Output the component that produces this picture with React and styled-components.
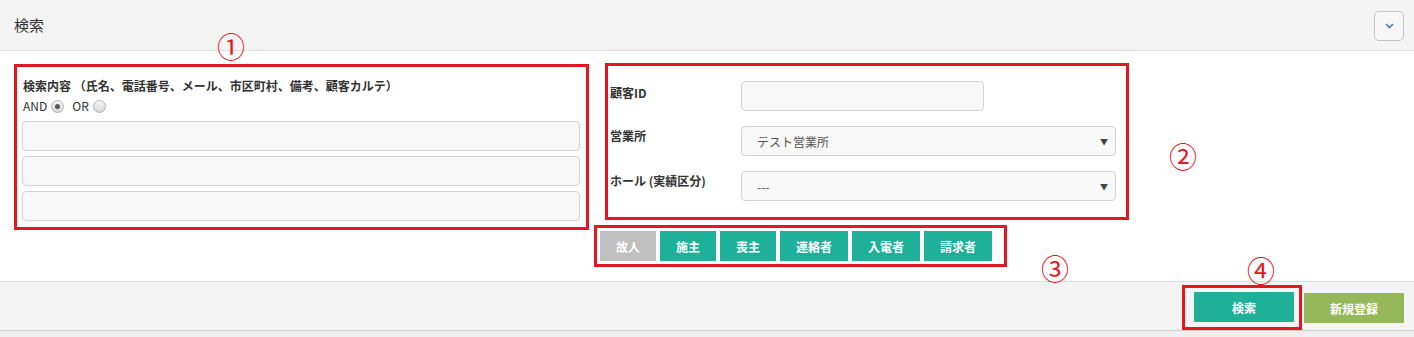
import React from "react";
import styled, { createGlobalStyle } from "styled-components";

const GlobalStyle = createGlobalStyle`
  html, body {
    margin: 0;
    padding: 0;
    background: #ffffff;
  }
  body {
    font-family: "Noto Sans CJK JP", "Open Sans", sans-serif;
    color: #333;
  }
  * { box-sizing: border-box; }
`;

const RED = "#e5161f";
const TEAL = "#1fb09a";

const Page = styled.div`
  position: relative;
  width: 1414px;
  height: 337px;
  overflow: hidden;
`;

const Header = styled.div`
  height: 51px;
  background: #f4f4f4;
  border-bottom: 1px solid #dedede;
  display: flex;
  align-items: center;
  justify-content: space-between;
  padding: 0 10px 0 14px;
`;

const Title = styled.h2`
  margin: 0 0 2px;
  font-size: 15px;
  font-weight: normal;
  color: #333;
`;

const CollapseButton = styled.button`
  width: 30px;
  height: 30px;
  margin-top: 1px;
  border: 1px solid #c4c4c4;
  border-radius: 5px;
  background: #f7f7f7;
  display: flex;
  align-items: center;
  justify-content: center;
  padding: 0;
`;

const Body = styled.div`
  height: 230px;
  display: flex;
  padding: 12px 0 0 14px;
  background: #fff;
`;

const Panel = styled.div`
  border: 3px solid ${RED};
`;

const KeywordPanel = styled(Panel)`
  width: 575px;
  height: 166px;
  margin-top: 1px;
  padding: 9px 6px 0 5px;
`;

const FieldLabel = styled.div`
  font-size: 12px;
  font-weight: bold;
  line-height: 20px;
  color: #333;
  padding-left: 1px;
`;

const RadioRow = styled.div`
  display: flex;
  align-items: center;
  font-size: 12px;
  line-height: 20px;
  height: 20px;
  padding-left: 1px;
  margin-bottom: 5px;
`;

const RadioLabel = styled.label`
  display: flex;
  align-items: center;
  gap: 4px;
  margin-right: 8px;
`;

const Radio = styled.span`
  width: 13px;
  height: 13px;
  border-radius: 50%;
  border: 1px solid #b3b3b3;
  background: linear-gradient(#f6f6f6, #d6d6d6);
  display: inline-flex;
  align-items: center;
  justify-content: center;
  &::after {
    content: "";
    width: 5px;
    height: 5px;
    border-radius: 50%;
    background: ${({ checked }) => (checked ? "#555" : "transparent")};
  }
`;

const TextInputs = styled.div`
  display: flex;
  flex-direction: column;
  gap: 5px;
`;

const TextBox = styled.div`
  height: ${({ h }) => h || 30}px;
  width: ${({ width }) => width || "100%"};
  background: #f8f8f8;
  border: 1px solid #d3d3d3;
  border-radius: 4px;
`;

const RightColumn = styled.div`
  display: flex;
  flex-direction: column;
  margin-left: 5px;
`;

const FilterPanel = styled(Panel)`
  width: 524px;
  height: 157px;
  margin-left: 11px;
  padding: 15px 0 0 2px;
  display: flex;
  flex-direction: column;
  gap: 15px;
`;

const FormRow = styled.div`
  display: flex;
  align-items: flex-start;
`;

const RowLabel = styled.div`
  width: 131px;
  font-size: 12px;
  font-weight: bold;
  line-height: 18px;
  padding-top: ${({ top }) => top || 3}px;
  color: #333;
`;

const SelectBox = styled.div`
  width: 375px;
  height: 30px;
  background: #f8f8f8;
  border: 1px solid #d3d3d3;
  border-radius: 4px;
  display: flex;
  align-items: center;
  justify-content: space-between;
  padding: 0 7px 0 15px;
  font-size: 12px;
  color: #555;
`;

const Arrow = styled.span`
  font-size: 8px;
  color: #444;
`;

const TagPanel = styled(Panel)`
  width: 413px;
  height: 42px;
  margin-top: 5px;
  padding: 3px 0 0 3px;
  display: flex;
  gap: 4px;
`;

const Tag = styled.button`
  width: ${({ wide }) => (wide ? 68 : 56)}px;
  height: 30px;
  border: none;
  padding: 0;
  background: ${({ muted }) => (muted ? "#c0c0c0" : TEAL)};
  color: #fff;
  font-family: inherit;
  font-size: 12px;
  font-weight: bold;
`;

const Footer = styled.div`
  height: 50px;
  background: #f4f4f4;
  border-top: 1px solid #dcdcdc;
  border-bottom: 1px solid #cdcdcd;
  display: flex;
  justify-content: flex-end;
  align-items: flex-start;
  padding: 3px 10px 0 0;
  gap: 2px;
`;

const SubmitFrame = styled(Panel)`
  width: 120px;
  height: 45px;
  padding: 4px 0 0 9px;
`;

const ActionButton = styled.button`
  width: 100px;
  height: 30px;
  border: none;
  padding: 0;
  margin-top: ${({ offset }) => offset || 0}px;
  background: ${({ color }) => color};
  color: #fff;
  font-family: inherit;
  font-size: 12px;
  font-weight: bold;
`;

const Strip = styled.div`
  height: 6px;
  background: #efefef;
`;

const Mark = styled.span`
  position: absolute;
  left: ${({ x }) => x}px;
  top: ${({ y }) => y}px;
  transform: translate(-50%, -50%);
  font-family: "Noto Sans CJK JP", sans-serif;
  font-size: 28px;
  line-height: 1;
  color: ${RED};
`;

const Chevron = () => (
  <svg width="9" height="6" viewBox="0 0 9 6">
    <path d="M1 1 L4.5 4.5 L8 1" fill="none" stroke="#3f7fbf" strokeWidth="1.6" />
  </svg>
);

const tags = [
  { label: "故人", muted: true },
  { label: "施主" },
  { label: "喪主" },
  { label: "連絡者", wide: true },
  { label: "入電者", wide: true },
  { label: "請求者", wide: true },
];

export default function App() {
  return (
    <Page>
      <GlobalStyle />
      <Header>
        <Title>検索</Title>
        <CollapseButton>
          <Chevron />
        </CollapseButton>
      </Header>

      <Body>
        <KeywordPanel>
          <FieldLabel>検索内容 （氏名、電話番号、メール、市区町村、備考、顧客カルテ）</FieldLabel>
          <RadioRow>
            <RadioLabel>
              AND <Radio checked />
            </RadioLabel>
            <RadioLabel>
              OR <Radio />
            </RadioLabel>
          </RadioRow>
          <TextInputs>
            <TextBox />
            <TextBox />
            <TextBox />
          </TextInputs>
        </KeywordPanel>

        <RightColumn>
          <FilterPanel>
            <FormRow>
              <RowLabel top={3}>顧客ID</RowLabel>
              <TextBox width="243px" />
            </FormRow>
            <FormRow>
              <RowLabel top={1}>営業所</RowLabel>
              <SelectBox>
                <span>テスト営業所</span>
                <Arrow>▼</Arrow>
              </SelectBox>
            </FormRow>
            <FormRow>
              <RowLabel top={1}>ホール (実績区分)</RowLabel>
              <SelectBox>
                <span>---</span>
                <Arrow>▼</Arrow>
              </SelectBox>
            </FormRow>
          </FilterPanel>

          <TagPanel>
            {tags.map((t) => (
              <Tag key={t.label} muted={t.muted} wide={t.wide}>
                {t.label}
              </Tag>
            ))}
          </TagPanel>
        </RightColumn>
      </Body>

      <Footer>
        <SubmitFrame>
          <ActionButton color={TEAL}>検索</ActionButton>
        </SubmitFrame>
        <ActionButton color="#95b85b" offset={8}>新規登録</ActionButton>
      </Footer>
      <Strip />

      <Mark x={231} y={46}>①</Mark>
      <Mark x={1183} y={156}>②</Mark>
      <Mark x={1055} y={268}>③</Mark>
      <Mark x={1261} y={270}>④</Mark>
    </Page>
  );
}
